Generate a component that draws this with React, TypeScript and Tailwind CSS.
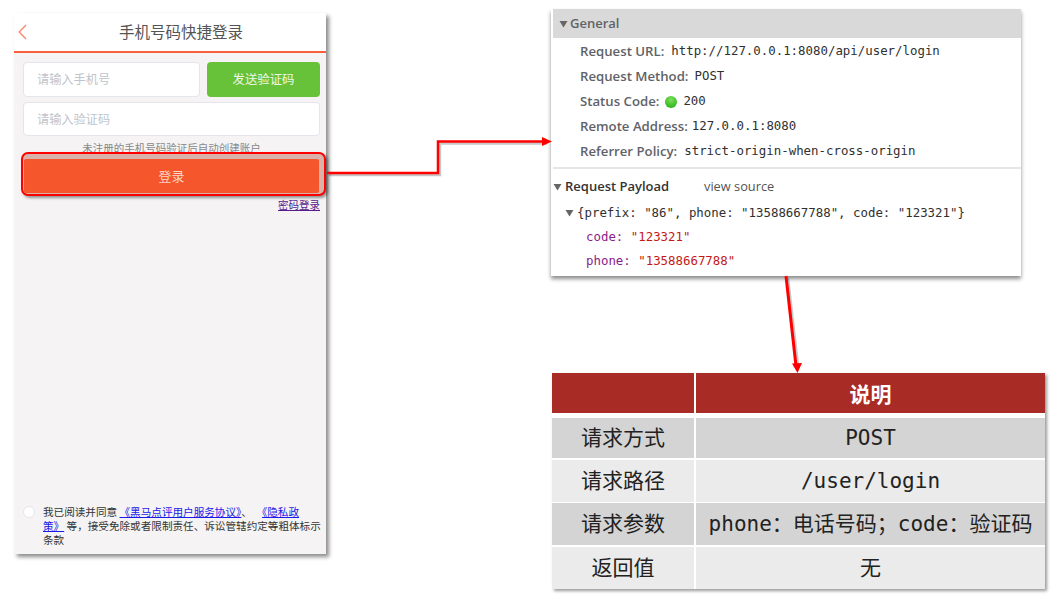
import React from 'react';

const cjk = "font-['Noto_Sans_CJK_SC','Noto_Sans',sans-serif]";
const mono = "font-['DejaVu_Sans_Mono','Noto_Sans_CJK_SC',monospace]";
const label = "font-['Open_Sans','Noto_Sans_CJK_SC',sans-serif]";

const generalRows = [
  { name: 'Request URL:', value: 'http://127.0.0.1:8080/api/user/login', gap: 'gap-[7px]' },
  { name: 'Request Method:', value: 'POST', gap: 'gap-[6px]' },
  { name: 'Status Code:', value: '200', dot: true, gap: 'gap-[6px]' },
  { name: 'Remote Address:', value: '127.0.0.1:8080', gap: 'gap-[4px]' },
  { name: 'Referrer Policy:', value: 'strict-origin-when-cross-origin', gap: 'gap-[7px]' },
];

const tableRows = [
  { name: '请求方式', value: 'POST', bg: 'bg-[#d4d4d4]', box: 'h-[40px]' },
  { name: '请求路径', value: '/user/login', bg: 'bg-[#ebebeb]', box: 'mt-[2px] h-[42px]' },
  { name: '请求参数', value: 'phone：电话号码；code：验证码', bg: 'bg-[#d4d4d4]', box: 'mt-[1px] h-[42px]' },
  { name: '返回值', value: '无', bg: 'bg-[#ebebeb]', box: 'mt-[2px] h-[42px]' },
];

const Triangle = () => (
  <svg width="9" height="8" viewBox="0 0 9 8" className="shrink-0">
    <path d="M0.5 1h8L4.5 7.5z" fill="#666" />
  </svg>
);

const LoginPanel = () => (
  <div className={`absolute left-[14px] top-[13px] flex h-[541px] w-[312px] flex-col bg-[#f5f3f4] shadow-[3px_3px_4px_rgba(0,0,0,0.45)] ${cjk}`}>
    <div className="relative box-content flex h-[37px] shrink-0 items-center justify-center border-b-2 border-[#f9603a] bg-white pb-px pl-[22px]">
      <svg className="absolute left-[4px] top-[11px]" width="9" height="16" viewBox="0 0 9 16">
        <path d="M8 1L1.2 8L8 15" fill="none" stroke="#f58a73" strokeWidth="1.4" />
      </svg>
      <span className="text-[15.5px] text-[#555]">手机号码快捷登录</span>
    </div>
    <div className="flex flex-col pl-[9px] pr-[6px] pt-[9px]">
      <div className="flex gap-[7px]">
        <div className="flex h-[35px] w-[177px] shrink-0 items-center rounded-[4px] border border-[#e4e6ec] bg-white pl-[13px] text-[12.2px] text-[#c0c4cc]">
          请输入手机号
        </div>
        <div className="flex h-[35px] w-[113px] shrink-0 items-center justify-center rounded-[4px] bg-[#67c23a] text-[12.4px] text-[#eef8e6]">
          发送验证码
        </div>
      </div>
      <div className="mt-[5px] flex h-[34px] w-[297px] items-center rounded-[4px] border border-[#e4e6ec] bg-white pl-[13px] text-[12.2px] text-[#c0c4cc]">
        请输入验证码
      </div>
      {/* the hint runs under the red highlight, as in the picture */}
      <div className="mt-[5px] h-[11px] w-[297px] whitespace-nowrap text-center text-[10.5px] leading-[14px] text-[#888]">
        未注册的手机号码验证后自动创建账户
      </div>
      <div className="relative z-10 ml-[-2px] flex h-[44px] w-[305px] shrink-0 items-end rounded-[7px] border-2 border-[#f00] bg-[#d9b3ab] pb-[1px] pl-[1px] shadow-[2px_2px_3px_rgba(0,0,0,0.4)]">
        <div className="flex h-[34px] w-[295px] items-center justify-center rounded-[2px] bg-[#f6562b] text-[13px] text-[#fbd5c8]">
          登录
        </div>
      </div>
      <div className="mt-[2px] w-[297px] text-right text-[10.5px] leading-[14px] text-[#551a8b] underline">
        密码登录
      </div>
    </div>
    <div className="mt-auto flex gap-[8px] pb-[7px] pl-[9px]">
      <div className="mt-[1px] h-[12px] w-[12px] shrink-0 rounded-full border border-[#e4e6ec] bg-white" />
      <p className="w-[280px] whitespace-nowrap text-[10.6px] leading-[14px] text-[#333]">
        我已阅读并同意 <span className="text-[#1a1ae8] underline">《黑马点评用户服务协议》</span>、<span className="ml-[10px] text-[#1a1ae8] underline">《隐私政<br />策》</span> 等，接受免除或者限制责任、诉讼管辖约定等粗体标示<br />条款
      </p>
    </div>
  </div>
);

const DevtoolsPanel = () => (
  <div className={`absolute left-[551px] top-[9px] flex h-[267px] w-[470px] flex-col bg-white pl-[2px] shadow-[0_3px_4px_rgba(0,0,0,0.45)] ${label}`}>
    <div className="flex h-[29px] shrink-0 items-center gap-[2px] bg-[#d9d9d9] pl-[6px] pt-[1px] text-[13px] font-semibold text-[#5f6368]">
      <Triangle />
      General
    </div>
    <div className="flex flex-col pl-[27px] pt-[1px]">
      {generalRows.map((row) => (
        <div key={row.name} className={`flex h-[25px] items-center ${row.gap}`}>
          <span className="text-[13.2px] font-semibold text-[#5f6368]">{row.name}</span>
          {row.dot && (
            <span className="h-[12px] w-[12px] rounded-full bg-[radial-gradient(circle_at_50%_30%,#7fe05a,#18a80e)]" />
          )}
          <span className={`text-[12.4px] text-[#303030] ${mono}`}>{row.value}</span>
        </div>
      ))}
    </div>
    <div className="mt-[3px] h-[2px] shrink-0 bg-[#e6e6e6]" />
    <div className="flex h-[36px] shrink-0 items-center">
      <Triangle />
      <span className="ml-[3px] w-[139px] text-[13px] font-semibold text-[#333]">Request Payload</span>
      <span className="text-[12.8px] text-[#555]">view source</span>
    </div>
    <div className={`mt-[1px] flex h-[14px] items-center gap-[3px] pl-[12px] text-[12.4px] text-[#303030] ${mono}`}>
      <Triangle />
      <span className="whitespace-nowrap">{'{prefix: "86", phone: "13588667788", code: "123321"}'}</span>
    </div>
    <div className={`mt-[10px] flex flex-col gap-[10px] pl-[33px] text-[12.4px] leading-[14px] ${mono}`}>
      <div><span className="text-[#8b1a8b]">code:</span> <span className="text-[#c41a16]">"123321"</span></div>
      <div><span className="text-[#8b1a8b]">phone:</span> <span className="text-[#c41a16]">"13588667788"</span></div>
    </div>
  </div>
);

const InfoTable = () => (
  <div className={`absolute left-[552px] top-[373px] flex w-[493px] flex-col bg-white shadow-[2px_2px_3px_rgba(0,0,0,0.4)] ${cjk}`}>
    <div className="grid h-[40px] grid-cols-[142px_349px] gap-x-[2px] bg-white">
      <div className="bg-[#a92b26]" />
      <div className="flex items-center justify-center bg-[#a92b26] pt-[1px] text-[21px] font-bold text-white">说明</div>
    </div>
    <div className="mt-[5px] flex flex-col">
      {tableRows.map((row) => (
        <div key={row.name} className={`grid grid-cols-[142px_349px] gap-x-[2px] ${row.box}`}>
          <div className={`flex items-center justify-center pb-[2px] text-[21px] text-[#222] ${row.bg}`}>{row.name}</div>
          <div className={`flex items-center justify-center whitespace-nowrap pt-[2px] text-[21px] text-[#222] ${mono} ${row.bg}`}>{row.value}</div>
        </div>
      ))}
    </div>
  </div>
);

// connectors between the panels
const Connectors = () => (
  <svg className="pointer-events-none absolute left-0 top-0 z-20" width="1058" height="605" viewBox="0 0 1058 605">
    <g fill="none" stroke="#000" strokeOpacity="0.22" strokeWidth="2.5" transform="translate(2 2)">
      <path d="M327 173H438V141.500H545" />
      <path d="M786 276L796 364" />
    </g>
    <path d="M327 173H438V141.500H545" fill="none" stroke="#f00" strokeWidth="2.5" />
    <path d="M542 137L552 141.500L542 146z" fill="#f00" />
    <path d="M786 276L796 366" fill="none" stroke="#f00" strokeWidth="3" />
    <path d="M792 363.500L802 363L797.500 373z" fill="#f00" />
  </svg>
);

const App = () => {
  return (
    <div className="relative h-[605px] w-[1058px] overflow-hidden bg-white">
      <LoginPanel />
      <DevtoolsPanel />
      <InfoTable />
      <Connectors />
    </div>
  );
};

export default App;
